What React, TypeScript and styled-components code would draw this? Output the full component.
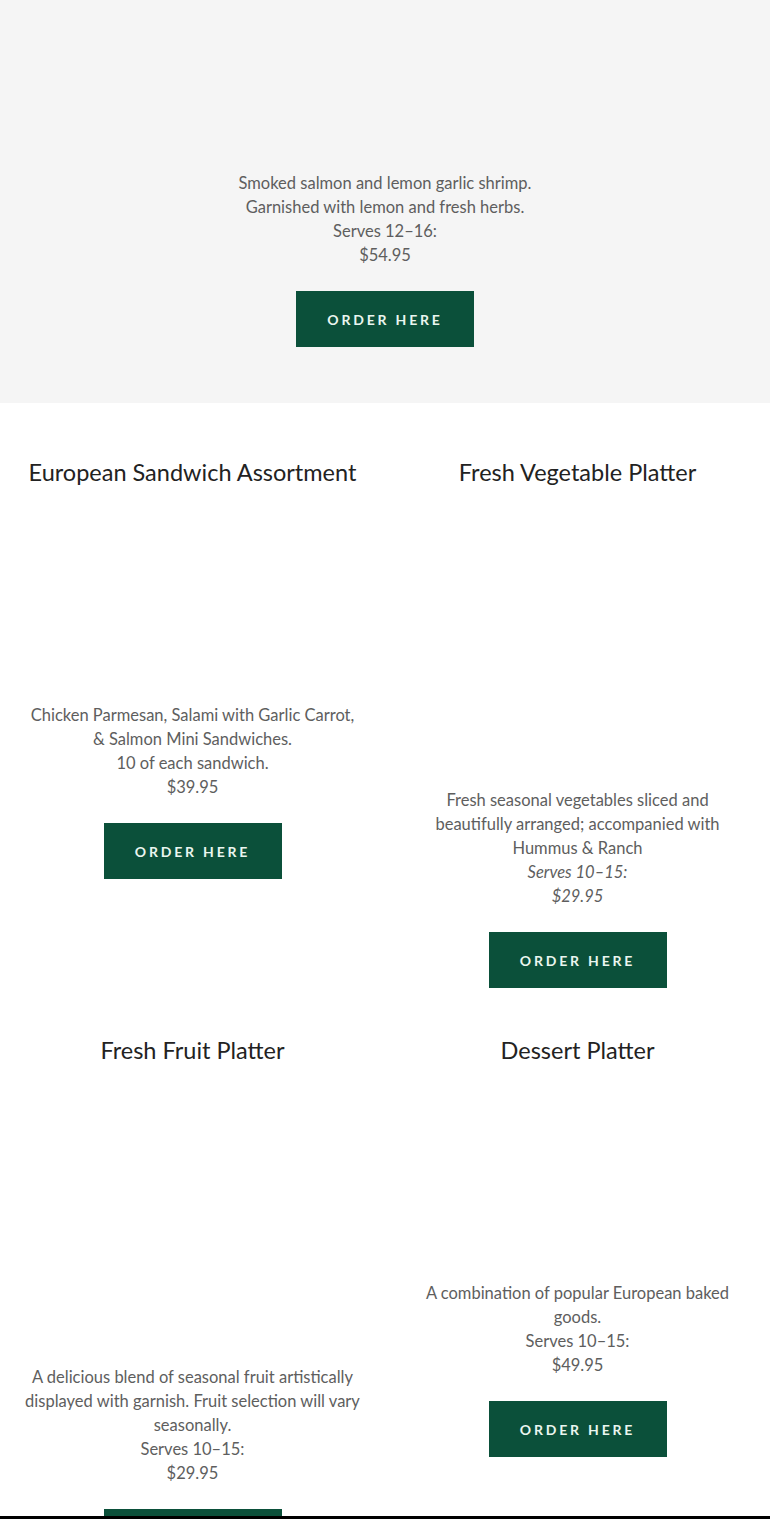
import styled, { createGlobalStyle } from "styled-components";

const GlobalStyle = createGlobalStyle`
	html, body {
		margin: 0;
		padding: 0;
		background: #ffffff;
		font-family: Lato, "Open Sans", sans-serif;
	}
`;

const FeaturedStyle = styled.section`
	background: #f5f5f5;
	padding: 0 20px 56px;
	display: flex;
	justify-content: center;
`;

const GridStyle = styled.section`
	display: grid;
	grid-template-columns: 1fr 1fr;
	align-items: start;
	padding-top: 55px;
`;

const CardStyle = styled.div<{ $last?: boolean }>`
	display: flex;
	flex-direction: column;
	align-items: center;
	padding: 0 20px ${(p) => (p.$last ? 0 : 48)}px;
	text-align: center;
`;

const TitleStyle = styled.h2`
	margin: 0;
	font-size: 23.5px;
	line-height: 29px;
	font-weight: 400;
	color: #222222;
	white-space: nowrap;
`;

const ImageSlot = styled.div<{ $h: number }>`
	width: 100%;
	height: ${(p) => p.$h}px;
`;

const DescStyle = styled.div`
	font-size: 16.5px;
	line-height: 24px;
	color: #5e5e5e;
`;

const LineStyle = styled.span<{ $italic?: boolean }>`
	display: block;
	white-space: nowrap;
	font-style: ${(p) => (p.$italic ? "italic" : "normal")};
`;

const OrderButton = styled.a`
	margin-top: 24px;
	width: 178px;
	height: 56px;
	display: flex;
	align-items: center;
	justify-content: center;
	background: #0b503a;
	color: #eaf6ef;
	font-size: 14px;
	font-weight: 700;
	letter-spacing: 2.8px;
	text-transform: uppercase;
	text-decoration: none;
	cursor: pointer;
`;

const BottomBar = styled.div`
	position: fixed;
	left: 0;
	right: 0;
	bottom: 0;
	height: 3px;
	background: #000000;
`;

type Item = {
	title?: string;
	image: number;
	lines: string[];
	serves: string;
	price: string;
	italic?: boolean;
};

const featured: Item = {
	image: 171,
	lines: [
		"Smoked salmon and lemon garlic shrimp.",
		"Garnished with lemon and fresh herbs.",
	],
	serves: "Serves 12–16:",
	price: "$54.95",
};

const items: Item[] = [
	{
		title: "European Sandwich Assortment",
		image: 216,
		lines: [
			"Chicken Parmesan, Salami with Garlic Carrot,",
			"& Salmon Mini Sandwiches.",
		],
		serves: "10 of each sandwich.",
		price: "$39.95",
	},
	{
		title: "Fresh Vegetable Platter",
		image: 301,
		lines: [
			"Fresh seasonal vegetables sliced and",
			"beautifully arranged; accompanied with",
			"Hummus & Ranch",
		],
		serves: "Serves 10–15:",
		price: "$29.95",
		italic: true,
	},
	{
		title: "Fresh Fruit Platter",
		image: 300,
		lines: [
			"A delicious blend of seasonal fruit artistically",
			"displayed with garnish. Fruit selection will vary",
			"seasonally.",
		],
		serves: "Serves 10–15:",
		price: "$29.95",
	},
	{
		title: "Dessert Platter",
		image: 216,
		lines: ["A combination of popular European baked", "goods."],
		serves: "Serves 10–15:",
		price: "$49.95",
	},
];

const Card = ({ item, last }: { item: Item; last?: boolean }) => (
	<CardStyle $last={last}>
		{item.title && <TitleStyle>{item.title}</TitleStyle>}
		<ImageSlot $h={item.image} />
		<DescStyle>
			{item.lines.map((l) => (
				<LineStyle key={l}>{l}</LineStyle>
			))}
			<LineStyle $italic={item.italic}>{item.serves}</LineStyle>
			<LineStyle $italic={item.italic}>{item.price}</LineStyle>
		</DescStyle>
		<OrderButton>Order Here</OrderButton>
	</CardStyle>
);

const App = () => {
	return (
		<>
			<GlobalStyle />
			<FeaturedStyle>
				<Card item={featured} last />
			</FeaturedStyle>
			<GridStyle>
				{items.map((item) => (
					<Card key={item.title} item={item} />
				))}
			</GridStyle>
			<BottomBar />
		</>
	);
};

export default App;
